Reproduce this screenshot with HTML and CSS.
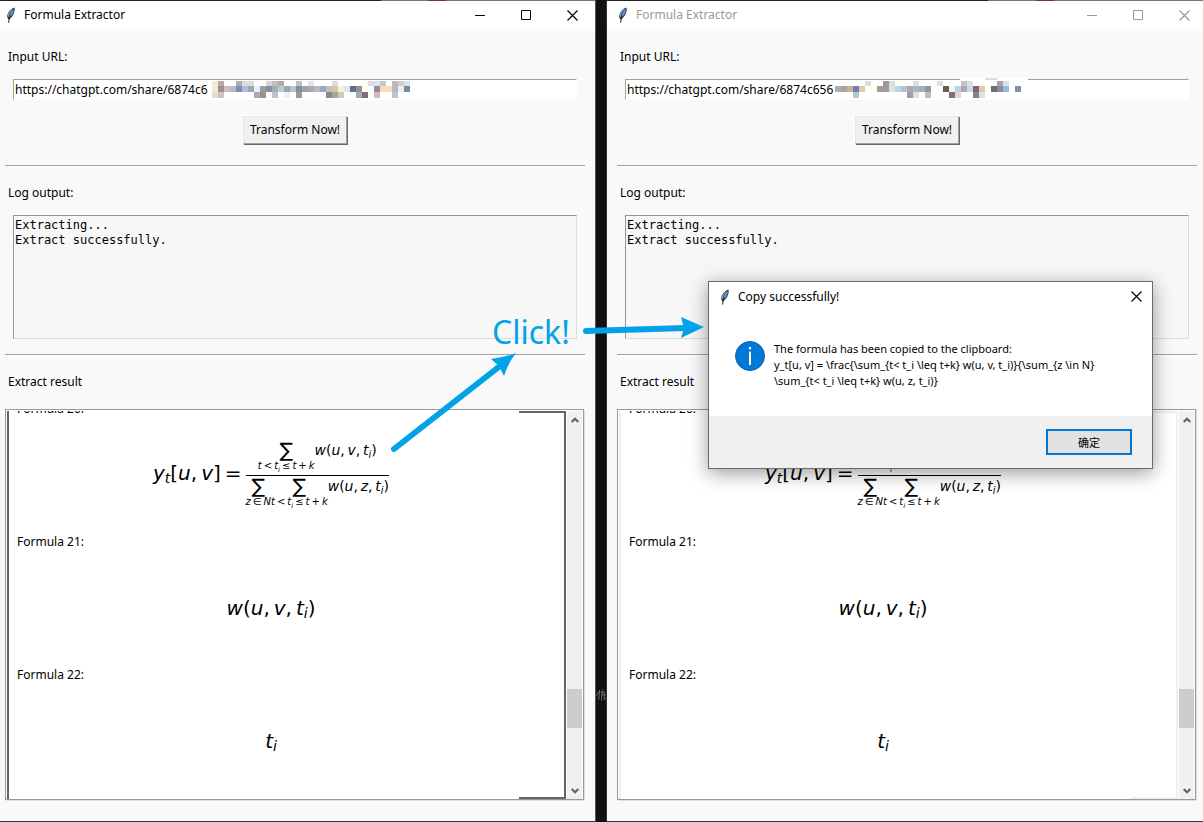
FILE: index.html
```html
<!DOCTYPE html>
<html lang="en">
<head>
<meta charset="utf-8">
<title>Formula Extractor</title>
<link rel="stylesheet" href="styles.css">
</head>
<body>
<svg class="defs" width="0" height="0" aria-hidden="true">
  <symbol id="feather" viewBox="0 0 10 16">
    <path d="M8.5 0.5 C5 1.5 1.5 5 1 10 L2.6 12.4 C6.6 10.5 9.4 5 8.5 0.5Z" fill="#2c3442"/>
    <path d="M7.5 2 C5.6 3.5 3.6 7 3.2 11 C6.3 8.6 8.2 5 7.5 2Z" fill="#5b9be6"/>
    <path d="M6 2.6 C3.8 4.6 2.2 7 2.1 10" fill="none" stroke="#b9bec6" stroke-width="1"/>
    <path d="M4.4 8.5 C3.6 10.5 3 12.5 2.6 15.6" fill="none" stroke="#111" stroke-width="1"/>
  </symbol>
  <symbol id="minimize" viewBox="0 0 11 11"><path d="M0 5.5H10" stroke="currentColor"/></symbol>
  <symbol id="maximize" viewBox="0 0 11 11"><path d="M.5 .5H9.5V9.5H.5Z" fill="none" stroke="currentColor"/></symbol>
  <symbol id="close" viewBox="0 0 11 11"><path d="M.5 .5L10.5 10.5M10.5 .5L.5 10.5" stroke="currentColor" stroke-width="1.2"/></symbol>
  <symbol id="up" viewBox="0 0 8 6"><path d="M.7 5L4 1.7L7.3 5" fill="none" stroke="currentColor" stroke-width="2"/></symbol>
  <symbol id="down" viewBox="0 0 8 6"><path d="M.7 1L4 4.3L7.3 1" fill="none" stroke="currentColor" stroke-width="2"/></symbol>
</svg>

<main class="desktop">
  <section class="window" aria-label="Formula Extractor">
    <header class="titlebar">
      <svg class="feather"><use href="#feather"/></svg>
      <h1 class="title">Formula Extractor</h1>
      <div class="controls">
        <button class="control" aria-label="Minimize"><svg><use href="#minimize"/></svg></button>
        <button class="control" aria-label="Maximize"><svg><use href="#maximize"/></svg></button>
        <button class="control" aria-label="Close"><svg><use href="#close"/></svg></button>
      </div>
    </header>
    <div class="content">
      <label class="label" for="url-a">Input URL:</label>
      <div class="field">
        <input class="entry" id="url-a" type="text" value="https://chatgpt.com/share/6874c6">
        <svg class="mosaic mosaic-a" data-cells="left" shape-rendering="crispEdges" aria-hidden="true"></svg>
      </div>
      <button class="transform">Transform Now!</button>
      <hr class="rule">
      <label class="label" for="log-a">Log output:</label>
      <textarea class="log" id="log-a" readonly>Extracting...
Extract successfully.</textarea>
      <hr class="rule rule-near">
      <h2 class="label">Extract result</h2>
      <div class="result">
        <div class="canvas">
          <ul class="formulas">
            <li class="formula">
              <p class="name">Formula 20:</p>
              <div class="math">
                <span><i>y<sub>t</sub></i>[<i>u</i>,&thinsp;<i>v</i>]</span><span class="equals">=</span>
                <span class="fraction">
                  <span class="part numerator"><span class="sum"><span class="sigma">∑</span><span class="limit"><i>t</i>&thinsp;&lt;&thinsp;<i>t<sub>i</sub></i>&thinsp;≤&thinsp;<i>t</i>&thinsp;+&thinsp;<i>k</i></span></span><span><i>w</i>(<i>u</i>,&thinsp;<i>v</i>,&thinsp;<i>t<sub>i</sub></i>)</span></span>
                  <span class="part"><span class="sum"><span class="sigma">∑</span><span class="limit"><i>z</i>&thinsp;∈&thinsp;<i>N</i></span></span><span class="sum"><span class="sigma">∑</span><span class="limit"><i>t</i>&thinsp;&lt;&thinsp;<i>t<sub>i</sub></i>&thinsp;≤&thinsp;<i>t</i>&thinsp;+&thinsp;<i>k</i></span></span><span><i>w</i>(<i>u</i>,&thinsp;<i>z</i>,&thinsp;<i>t<sub>i</sub></i>)</span></span>
                </span>
              </div>
            </li>
            <li class="formula">
              <p class="name">Formula 21:</p>
              <div class="math"><span><i>w</i>(<i>u</i>,&thinsp;<i>v</i>,&thinsp;<i>t<sub>i</sub></i>)</span></div>
            </li>
            <li class="formula">
              <p class="name">Formula 22:</p>
              <div class="math"><span><i>t<sub>i</sub></i></span></div>
            </li>
          </ul>
        </div>
        <div class="scrollbar">
          <button class="step" aria-label="Scroll up"><svg><use href="#up"/></svg></button>
          <div class="track"><div class="thumb"></div></div>
          <button class="step" aria-label="Scroll down"><svg><use href="#down"/></svg></button>
        </div>
      </div>
    </div>
  </section>

  <div class="gap"><svg class="smudge" viewBox="0 0 11 16" aria-hidden="true"><path d="M0 9L4 3L3 13M5 5H10M6 8H11M7 2L6 14M9 4L9 13L11 11" fill="none" stroke="#77746f" stroke-width="1"/></svg></div>

  <section class="window inactive" aria-label="Formula Extractor, after copying">
    <header class="titlebar">
      <svg class="feather"><use href="#feather"/></svg>
      <h1 class="title">Formula Extractor</h1>
      <div class="controls">
        <button class="control" aria-label="Minimize"><svg><use href="#minimize"/></svg></button>
        <button class="control" aria-label="Maximize"><svg><use href="#maximize"/></svg></button>
        <button class="control" aria-label="Close"><svg><use href="#close"/></svg></button>
      </div>
    </header>
    <div class="content">
      <label class="label" for="url-b">Input URL:</label>
      <div class="field">
        <input class="entry" id="url-b" type="text" value="https://chatgpt.com/share/6874c656">
        <svg class="mosaic mosaic-b" data-cells="right" shape-rendering="crispEdges" aria-hidden="true"></svg>
      </div>
      <button class="transform">Transform Now!</button>
      <hr class="rule">
      <label class="label" for="log-b">Log output:</label>
      <textarea class="log" id="log-b" readonly>Extracting...
Extract successfully.</textarea>
      <hr class="rule rule-near">
      <h2 class="label">Extract result</h2>
      <div class="result">
        <div class="canvas">
          <ul class="formulas">
            <li class="formula">
              <p class="name">Formula 20:</p>
              <div class="math">
                <span><i>y<sub>t</sub></i>[<i>u</i>,&thinsp;<i>v</i>]</span><span class="equals">=</span>
                <span class="fraction">
                  <span class="part numerator"><span class="sum"><span class="sigma">∑</span><span class="limit"><i>t</i>&thinsp;&lt;&thinsp;<i>t<sub>i</sub></i>&thinsp;≤&thinsp;<i>t</i>&thinsp;+&thinsp;<i>k</i></span></span><span><i>w</i>(<i>u</i>,&thinsp;<i>v</i>,&thinsp;<i>t<sub>i</sub></i>)</span></span>
                  <span class="part"><span class="sum"><span class="sigma">∑</span><span class="limit"><i>z</i>&thinsp;∈&thinsp;<i>N</i></span></span><span class="sum"><span class="sigma">∑</span><span class="limit"><i>t</i>&thinsp;&lt;&thinsp;<i>t<sub>i</sub></i>&thinsp;≤&thinsp;<i>t</i>&thinsp;+&thinsp;<i>k</i></span></span><span><i>w</i>(<i>u</i>,&thinsp;<i>z</i>,&thinsp;<i>t<sub>i</sub></i>)</span></span>
                </span>
              </div>
            </li>
            <li class="formula">
              <p class="name">Formula 21:</p>
              <div class="math"><span><i>w</i>(<i>u</i>,&thinsp;<i>v</i>,&thinsp;<i>t<sub>i</sub></i>)</span></div>
            </li>
            <li class="formula">
              <p class="name">Formula 22:</p>
              <div class="math"><span><i>t<sub>i</sub></i></span></div>
            </li>
          </ul>
        </div>
        <div class="scrollbar">
          <button class="step" aria-label="Scroll up"><svg><use href="#up"/></svg></button>
          <div class="track"><div class="thumb"></div></div>
          <button class="step" aria-label="Scroll down"><svg><use href="#down"/></svg></button>
        </div>
      </div>
    </div>

    <div class="dialog" role="dialog" aria-labelledby="dialog-title">
      <header class="dialog-head">
        <svg class="feather"><use href="#feather"/></svg>
        <h2 class="title" id="dialog-title">Copy successfully!</h2>
        <button class="dialog-close" aria-label="Close"><svg><use href="#close"/></svg></button>
      </header>
      <div class="dialog-body">
        <svg class="info" viewBox="0 0 30 30" aria-hidden="true"><circle cx="15" cy="15" r="14.5" fill="#0078d7" stroke="#1460a4"/><path d="M14 10.5H16V24H14ZM13.9 6H16.1V8.2H13.9Z" fill="#fff"/></svg>
        <p class="message">The formula has been copied to the clipboard:<br>y_t[u, v] = \frac{\sum_{t&lt; t_i \leq t+k} w(u, v, t_i)}{\sum_{z \in N}<br>\sum_{t&lt; t_i \leq t+k} w(u, z, t_i)}</p>
      </div>
      <footer class="dialog-foot"><button class="confirm" lang="zh-CN">确定</button></footer>
    </div>
  </section>

  <div class="notes">
    <span class="click">Click!</span>
    <svg class="arrows" viewBox="0 0 340 170" aria-hidden="true">
      <path d="M14 159L120 76M206 41L306 38" fill="none" stroke="#00a2e8" stroke-width="6" stroke-linecap="round"/>
      <path d="M324 37L301 48L304 38L301 27Z" fill="#00a2e8"/>
      <path d="M111 69Q126 67 136 63Q128 73 124 86L119 76Z" fill="#00a2e8"/>
    </svg>
  </div>
</main>
<script src="mosaic.js"></script>
</body>
</html>
```
FILE: styles.css
```css
* { box-sizing: border-box; }

body {
  margin: 0;
  background: #111;
  color: #000;
  font-family: "Noto Sans", "Noto Sans CJK SC", sans-serif;
  font-size: 12px;
  line-height: 18px;
}

h1, h2, p, ul { margin: 0; padding: 0; font-size: inherit; font-weight: 400; }
button { padding: 0; border: 0; background: none; color: inherit; font: inherit; }
.defs { position: absolute; }

.desktop {
  position: relative;
  display: grid;
  grid-template-columns: 1fr 11px 1fr;
  min-height: 100vh;
}

.gap {
  display: flex;
  align-items: flex-end;
  padding-bottom: 119px;
  background: #111;
  border-right: 1px solid #333;
}
.smudge { width: 11px; height: 16px; }

/* Window frame */
.window {
  position: relative;
  display: flex;
  flex-direction: column;
  background: #f9f9f9;
  border-right: 1px solid #555;
  border-bottom: 1px solid #333;
}
.window::before {
  content: "";
  flex: none;
  height: 1px;
  background: linear-gradient(90deg, #222 0 64%, #777 64% 72%, #733840 72% 75%, #777 75%);
}
.titlebar {
  display: flex;
  align-items: center;
  height: 30px;
  padding-bottom: 2px;
  padding-left: 6px;
  background: #fff;
}
.feather { width: 10px; height: 16px; }
.title { margin-left: 8px; }
.controls { display: flex; margin-left: auto; }
.control { width: 46px; height: 28px; }
.control svg, .dialog-close svg { display: block; width: 11px; height: 11px; margin: 0 auto; }

.content {
  display: flex;
  flex-direction: column;
  flex: 1;
  padding: 17px 10px 21px 5px;
}
.label { height: 20px; margin-left: 3px; }

.field { position: relative; margin: 11px 8px 0; }
.entry {
  display: block;
  width: 100%;
  height: 21px;
  padding: 0 1px;
  border: 1px solid;
  border-color: #a0a0a0 #fff #fff #a0a0a0;
  background: #fff;
  color: #000;
  font: inherit;
}
.mosaic { position: absolute; top: -1px; height: 22px; }
.mosaic-a { left: 199px; width: 200px; }
.mosaic-b { left: 210px; width: 194px; }

.transform {
  align-self: center;
  min-width: 104px;
  height: 28px;
  margin-top: 16px;
  border: 1px solid;
  border-color: #e6e6e6 #a0a0a0 #a0a0a0 #e6e6e6;
  background: #f0f0f0;
  box-shadow: 1px 1px #696969, -1px -1px #fff;
}
.rule {
  width: 100%;
  height: 2px;
  margin: 21px 0 17px;
  border: 0;
  border-top: 1px solid #a0a0a0;
  background: #fff;
}
.rule-near { margin-top: 15px; }

.log {
  display: block;
  height: 124px;
  margin: 11px 8px 0;
  padding: 2px 1px;
  border: 1px solid;
  border-color: #969696 #ddd #ddd #969696;
  background: #f7f7f7;
  color: #000;
  font: 12px/15px "DejaVu Sans Mono", monospace;
  resize: none;
}

/* Result list */
.result {
  display: flex;
  flex: 1;
  margin-top: 16px;
  margin-right: 1px;
  padding: 1px 1px 0;
  border: 1px solid #999;
  box-shadow: 1px 1px #e0e0e0;
  background: #fff;
}
.canvas {
  --edge: #646464;
  position: relative;
  flex: 1;
  overflow: hidden;
  margin-right: 1px;
  border: solid var(--edge);
  border-width: 0 2px;
}
.inactive .canvas { --edge: #f0f0f0; }
.canvas::before, .canvas::after {
  content: "";
  position: absolute;
  right: 0;
  width: 45px;
  height: 2px;
  background: var(--edge);
}
.canvas::before { top: 0; }
.canvas::after { bottom: 0; }
.formulas { margin-top: -11px; padding: 0 39px 0 8px; list-style: none; }
.formula { height: 133px; }
.formula:last-child { height: 120px; }
.name { height: 20px; }
.math {
  display: flex;
  align-items: center;
  justify-content: center;
  height: 110px;
  font: 20px/24px "DejaVu Sans", sans-serif;
  white-space: nowrap;
}
.formula:first-child .math { height: 106px; }
.math sub { font-size: 70%; line-height: 0; vertical-align: -3px; }
.equals { margin: 0 4px; }
.fraction { display: flex; flex-direction: column; padding-top: 4px; font-size: 14px; line-height: 20px; }
.part { display: flex; justify-content: center; height: 34px; }
.numerator { height: 36px; border-bottom: 1px solid #000; }
.sum { display: flex; flex-direction: column; align-items: center; }
.sigma { height: 20px; font-size: 20px; line-height: 20px; }
.limit { font-size: 10px; line-height: 12px; }

.scrollbar { display: flex; flex-direction: column; width: 15px; background: #f0f0f0; color: #606060; }
.step { height: 17px; }
.step svg { display: block; width: 8px; height: 6px; margin: 0 auto; }
.track { display: flex; flex-direction: column; flex: 1; justify-content: flex-end; padding-bottom: 54px; }
.thumb { height: 39px; background: #cdcdcd; }

/* Inactive window */
.inactive { border-right: 0; }
.inactive .titlebar { padding-left: 11px; color: #999; }
.inactive .controls { margin-right: -4px; }
.inactive .content { padding-right: 6px; padding-left: 10px; }

/* Message box */
.dialog {
  position: absolute;
  top: 281px;
  left: 101px;
  width: 445px;
  border: 1px solid #6a6a6a;
  background: #fff;
  box-shadow: 0 4px 18px rgba(0, 0, 0, .4);
}
.dialog-head { display: flex; align-items: center; height: 29px; padding-left: 11px; }
.dialog-close { width: 31px; height: 29px; margin-left: auto; }
.dialog-body { display: flex; gap: 9px; min-height: 105px; padding: 30px 26px 27px; }
.info { flex: none; width: 30px; height: 30px; }
.message { font-size: 11px; line-height: 16px; white-space: nowrap; }
.dialog-foot { display: flex; justify-content: flex-end; padding: 13px 20px; background: #f0f0f0; }
.confirm {
  width: 86px;
  height: 26px;
  border: 2px solid #0078d7;
  background: #e1e1e1;
  font: 11px/20px "Noto Sans CJK SC", sans-serif;
}

/* Hand-drawn annotation over both windows */
.notes { position: absolute; top: 290px; left: 380px; width: 340px; height: 170px; color: #00a2e8; pointer-events: none; }
.click { position: absolute; top: 20px; left: 112px; font-size: 32px; line-height: 44px; }
.arrows { display: block; width: 340px; height: 170px; }
```
FILE: mosaic.js
```js
// Each entry is "column,row,colour" on a grid of 6px blocks that hides the end of the link.
const cells = {
  left: "0,0,f4ead0 0,1,f4ead0 0,2,dddddd 1,0,b5a9ae 1,1,a18c94 1,2,d0c2bc 2,1,ccc0bc 3,1,b4bcc8 4,0,b5a9b0 4,1,7f91aa 5,0,dddddd 5,1,a5c0e0 6,0,dddddd 6,1,9aa6b4 7,1,e4f2fc 7,2,aca8b6 8,1,98a09c 8,2,98948c 9,0,d8d4d4 9,1,8a90a0 10,0,c6bcb8 10,1,a4acb4 10,2,b8c4d2 11,0,b0a8b0 11,1,bccdd8 12,1,9aa6b4 12,2,e4f2fc 13,1,b8c4d2 14,0,c0c0c0 14,1,8a8c94 14,2,a09898 15,1,98a4b0 16,0,dce4f0 16,1,b4a89c 17,1,b4bcc8 18,1,98a8c4 19,1,d0bcb0 19,2,848a9c 20,0,dddddd 20,1,d0c4bc 20,2,a4a894 21,1,faf0d4 21,2,d0c8bc 22,1,dce4f0 23,1,6c6c7c 24,1,949494 24,2,a8a8b8 25,1,fffaf0 25,2,846c7c 26,0,dddddd 27,0,d4e4f4 27,1,948c9c 27,2,d0bcb0 28,0,c0c8c8 28,1,f8dcbc 29,1,f8dcbc 30,0,c4b8b0 30,1,b0b8d4 30,2,c4c0c8 31,0,d4ccc4 31,1,f4ece4 32,0,d4e4f4 32,1,7c8c94",
  right: "0,1,b4a8b0 1,1,aaa4a4 2,1,ccb0a0 3,1,6c84a8 3,2,b8c4d4 4,1,e4c8a8 5,0,dddddd 6,1,fffff0 7,1,98a09c 8,0,a09890 8,1,a49c94 9,0,dddddd 9,1,dce4e0 10,1,b8d8ea 11,1,b8c0cc 12,1,aaa8ac 12,2,98a0ac 13,0,dddddd 13,1,aab4c4 13,2,e0e0e0 14,1,a4b0b4 15,1,9098a4 15,2,bcc0c0 17,0,dddddd 18,1,6c5c48 19,1,e0fcfc 19,2,846c7c 20,1,c4d0dc 20,2,e0d8d0 21,0,bcc4c4 21,1,b4a8a8 22,0,dddddd 22,1,c8dce8 23,1,7c647c 23,2,8c847c 24,1,e4c8a8 24,2,dce0ec 26,0,f4ffff 26,1,6c6c7c 27,0,aaa4a8 27,1,8c8894 28,0,dddddd 28,1,9cb8dc 30,1,8490a0"
};

const block = (x, y, width, height, fill) =>
  `<rect x="${x}" y="${y}" width="${width}" height="${height}" fill="${fill}"/>`;

for (const svg of document.querySelectorAll(".mosaic")) {
  const side = svg.dataset.cells;
  let shapes = side === "left"
    ? block(0, 3, 198, 17, "#fff")
    : block(0, 3, 193, 17, "#fff") + block(125, 0, 68, 8, "#fff") + block(150, 0, 12, 2, "#dddddd");
  for (const cell of cells[side].split(" ")) {
    const [column, row, colour] = cell.split(",");
    shapes += block(column * 6, [3, 8, 14][row], 6, row === "0" ? 5 : 6, "#" + colour);
  }
  svg.innerHTML = shapes;
}
```
